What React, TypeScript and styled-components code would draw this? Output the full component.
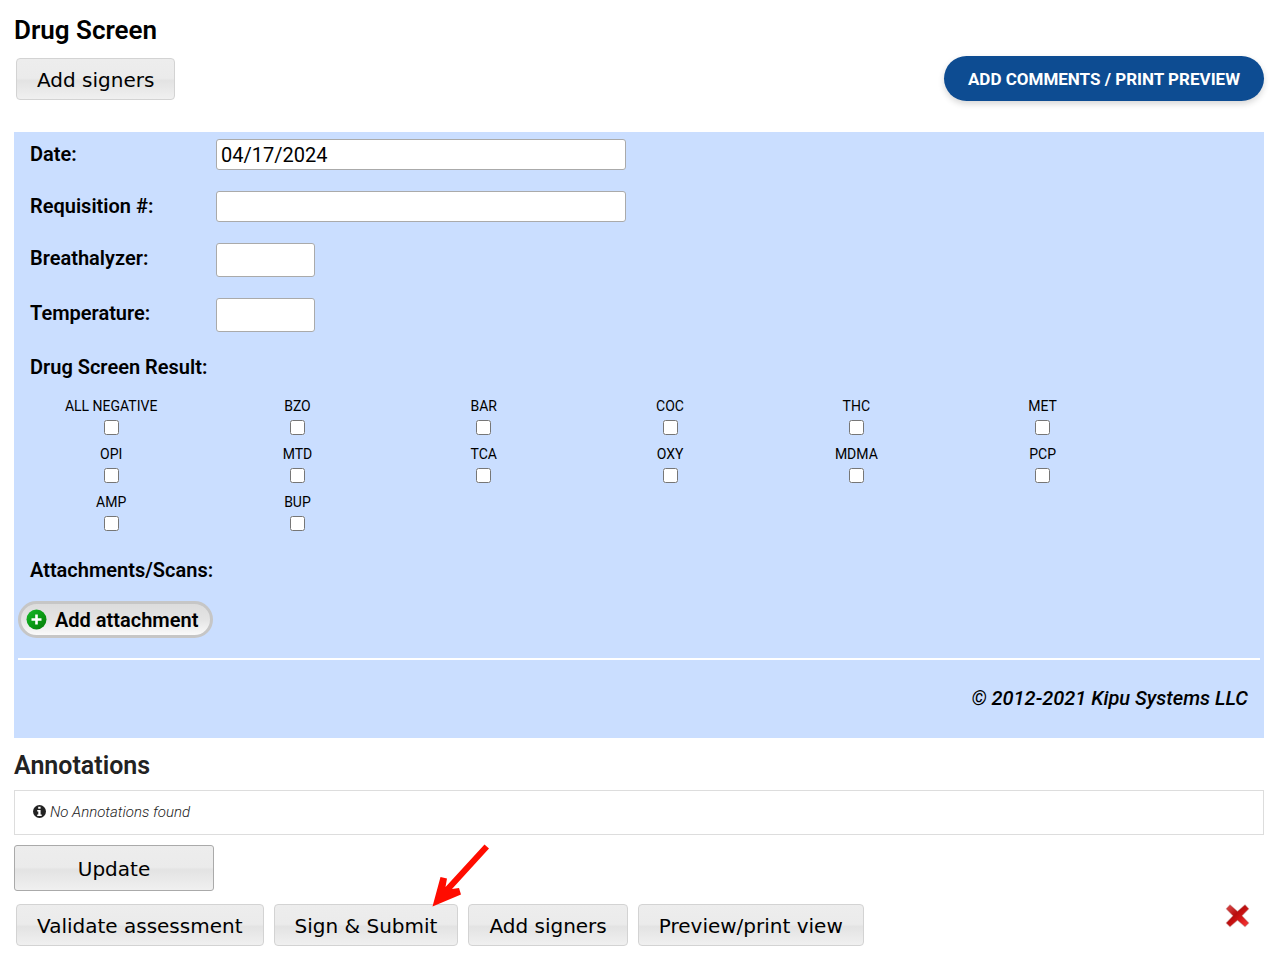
import React from "react";
import styled, { createGlobalStyle } from "styled-components";

const GlobalStyle = createGlobalStyle`
  *, *::before, *::after { box-sizing: border-box; }
  body {
    margin: 0;
    background: #fff;
    color: #000;
    font-family: Roboto, "Liberation Sans", sans-serif;
  }
`;

const Page = styled.main`
  padding: 14px 19px 8px 14px;
`;

const Heading = styled.h1`
  margin: 0;
  font-size: 26px;
  line-height: 32px;
  font-weight: 600;
`;

const SubHeading = styled.h2`
  margin: 12px 0 8px;
  font-size: 25px;
  line-height: 32px;
  font-weight: 600;
  color: #222;
`;

const TopBar = styled.div`
  display: flex;
  justify-content: space-between;
  align-items: flex-start;
  padding: 10px 0 31px;
`;

const Button = styled.button`
  height: 42px;
  padding: 2px 20px 0;
  border: 1px solid #d3d3d3;
  border-radius: 4px;
  background: linear-gradient(#ededed 0%, #ebebeb 48%, #e3e3e3 54%, #f0f0f0 100%);
  color: #000;
  font-family: "DejaVu Sans", Verdana, sans-serif;
  font-size: 20px;
  line-height: 24px;
  white-space: nowrap;
`;

const UpdateButton = styled(Button)`
  display: block;
  width: 200px;
  height: 46px;
  margin-top: 10px;
  border-color: #aaa;
  border-radius: 3px;
`;

const TopBarButton = styled(Button)`
  margin: 2px 2px 0;
`;

const PillButton = styled.button`
  min-width: 320px;
  height: 45px;
  padding: 0 16px;
  border: 0;
  border-radius: 23px;
  background: #0d4c92;
  box-shadow: 0 3px 6px rgba(0, 0, 0, 0.16);
  color: #fff;
  font-family: inherit;
  font-size: 17px;
  line-height: 24px;
  font-weight: 700;
  white-space: nowrap;
`;

const Panel = styled.section`
  padding: 7px 4px 25px;
  background: #cadeff;
`;

const Field = styled.div`
  display: grid;
  grid-template-columns: 186px 1fr;
  align-items: start;
  padding: 0 12px;
  margin-bottom: 21px;
`;

const FieldLabel = styled.label`
  font-size: 20px;
  line-height: 30px;
  font-weight: 600;
`;

const TextInput = styled.input<{ $short?: boolean }>`
  width: ${(p) => (p.$short ? "99px" : "410px")};
  height: ${(p) => (p.$short ? "34px" : "31px")};
  padding: 0 4px;
  border: 1px solid #aaa;
  border-radius: 3px;
  background: #fff;
  color: #000;
  font-family: inherit;
  font-size: 20px;
`;

const SectionTitle = styled.h3`
  margin: 0 12px;
  font-size: 20px;
  line-height: 28px;
  font-weight: 600;
`;

const Results = styled.fieldset`
  display: grid;
  grid-template-columns: repeat(6, 15%);
  row-gap: 9px;
  margin: 0;
  padding: 15px 0 25px;
  border: 0;
`;

const Result = styled.label`
  display: flex;
  flex-direction: column;
  align-items: center;
  gap: 4px;
  font-size: 14px;
  line-height: 20px;
`;

const Check = styled.input`
  width: 15px;
  height: 15px;
  margin: 0;
`;

const AttachButton = styled.button`
  display: flex;
  align-items: center;
  gap: 8px;
  height: 37px;
  margin: 17px 0 20px;
  padding: 0 12px 0 5px;
  border: 3px solid #c6c6c6;
  border-radius: 19px;
  background: linear-gradient(#dcdcdc 0%, #e4e4e4 50%, #fafafa 100%);
  color: #000;
  font-family: inherit;
  font-size: 20px;
  line-height: 24px;
  font-weight: 600;
  white-space: nowrap;
`;

const Rule = styled.hr`
  height: 2px;
  margin: 0;
  border: 0;
  background: #fff;
`;

const Copyright = styled.p`
  margin: 23px 12px 0;
  font-size: 20px;
  line-height: 30px;
  font-weight: 500;
  font-style: italic;
  text-align: right;
`;

const Notice = styled.div`
  display: flex;
  align-items: center;
  gap: 4px;
  height: 45px;
  padding: 0 18px 2px;
  border: 1px solid #ddd;
  color: #222;
  font-size: 15px;
  line-height: 20px;
  font-weight: 300;
  font-style: italic;
`;

const Actions = styled.div`
  display: flex;
  align-items: flex-start;
  gap: 10px;
  margin-top: 13px;
  padding: 0 14px 0 2px;
`;

const Marked = styled.div`
  position: relative;
`;

const Pointer = styled.svg`
  position: absolute;
  right: -34px;
  top: -62px;
  pointer-events: none;
`;

const CloseButton = styled.button`
  width: 25px;
  height: 24px;
  margin-left: auto;
  padding: 0;
  border: 0;
  background: none;
`;

const results = [
  "ALL NEGATIVE", "BZO", "BAR", "COC", "THC", "MET",
  "OPI", "MTD", "TCA", "OXY", "MDMA", "PCP",
  "AMP", "BUP",
];

const fields = [
  { id: "date", label: "Date:", value: "04/17/2024", short: false },
  { id: "requisition", label: "Requisition #:", value: "", short: false },
  { id: "breathalyzer", label: "Breathalyzer:", value: "", short: true },
  { id: "temperature", label: "Temperature:", value: "", short: true },
];

const PlusIcon = () => (
  <svg width="21" height="21" viewBox="0 0 21 21" aria-hidden="true">
    <defs>
      <linearGradient id="plus-fill" x1="0" y1="0" x2="1" y2="1">
        <stop offset="0" stopColor="#19b82c" />
        <stop offset="0.5" stopColor="#0a9c14" />
        <stop offset="1" stopColor="#067a0a" />
      </linearGradient>
    </defs>
    <circle cx="10.5" cy="10.5" r="10" fill="url(#plus-fill)" />
    <path d="M10.5 5.5v10M5.5 10.5h10" stroke="#fff" strokeWidth="2.6" />
  </svg>
);

const InfoIcon = () => (
  <svg width="13" height="13" viewBox="0 0 13 13" aria-hidden="true">
    <circle cx="6.5" cy="6.5" r="6.5" fill="#222" />
    <path d="M5.2 1.8h2.4v2H5.2zM4.2 5h3.4v4.4h1.1v1.5H4.2V9.4h1.1V6.5H4.2z" fill="#fff" />
  </svg>
);

const CrossIcon = () => (
  <svg width="25" height="24" viewBox="0 0 25 24" aria-hidden="true">
    <defs>
      <linearGradient id="cross-fill" x1="0" y1="0" x2="1" y2="1">
        <stop offset="0" stopColor="#e05050" />
        <stop offset="0.42" stopColor="#b80c0c" />
        <stop offset="0.6" stopColor="#d01414" />
        <stop offset="1" stopColor="#ff3a3a" />
      </linearGradient>
    </defs>
    <path
      d="M5 1 12.5 7.6 20 1 23.6 4.8 16.8 11.8 23.6 19 20 22.6 12.5 16 5 22.6 1.4 19 8.2 11.8 1.4 4.8z"
      fill="url(#cross-fill)"
      stroke="#a33"
      strokeOpacity="0.4"
      strokeWidth="1.2"
      strokeLinejoin="round"
    />
  </svg>
);

export default function App() {
  return (
    <>
      <GlobalStyle />
      <Page>
        <Heading>Drug Screen</Heading>
        <TopBar>
          <TopBarButton type="button">Add signers</TopBarButton>
          <PillButton type="button">ADD COMMENTS / PRINT PREVIEW</PillButton>
        </TopBar>

        <Panel>
          {fields.map((f) => (
            <Field key={f.id}>
              <FieldLabel htmlFor={f.id}>{f.label}</FieldLabel>
              <TextInput id={f.id} type="text" defaultValue={f.value} $short={f.short} />
            </Field>
          ))}
          <SectionTitle id="results-title">Drug Screen Result:</SectionTitle>
          <Results aria-labelledby="results-title">
            {results.map((name) => (
              <Result key={name}>
                {name}
                <Check type="checkbox" />
              </Result>
            ))}
          </Results>
          <SectionTitle>Attachments/Scans:</SectionTitle>
          <AttachButton type="button">
            <PlusIcon />
            Add attachment
          </AttachButton>
          <Rule />
          <Copyright>© 2012-2021 Kipu Systems LLC</Copyright>
        </Panel>

        <SubHeading>Annotations</SubHeading>
        <Notice>
          <InfoIcon />
          No Annotations found
        </Notice>

        <UpdateButton type="button">Update</UpdateButton>
        <Actions>
          <Button type="button">Validate assessment</Button>
          <Marked>
            <Button type="button">Sign &amp; Submit</Button>
            <Pointer width="62" height="66" viewBox="0 0 62 66" aria-hidden="true">
              <path
                d="M54.5 2.5 59 6.5 22 47 29 46 31 52.5 2.5 64.5 10.5 35 17 36.5 15.5 45z"
                fill="#ff0c00"
              />
            </Pointer>
          </Marked>
          <Button type="button">Add signers</Button>
          <Button type="button">Preview/print view</Button>
          <CloseButton type="button" aria-label="Close">
            <CrossIcon />
          </CloseButton>
        </Actions>
      </Page>
    </>
  );
}
